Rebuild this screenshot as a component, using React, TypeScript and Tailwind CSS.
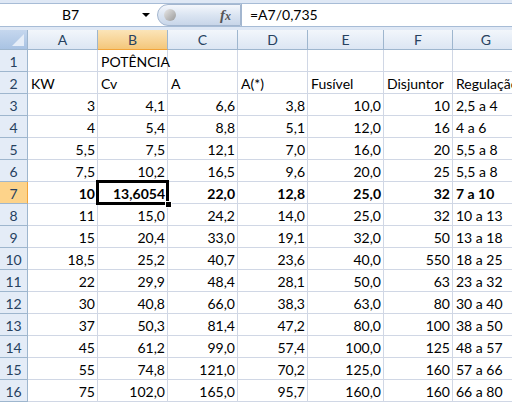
const rows: string[][] = [
  ["3", "4,1", "6,6", "3,8", "10,0", "10", "2,5 a 4"],
  ["4", "5,4", "8,8", "5,1", "12,0", "16", "4 a 6"],
  ["5,5", "7,5", "12,1", "7,0", "16,0", "20", "5,5 a 8"],
  ["7,5", "10,2", "16,5", "9,6", "20,0", "25", "5,5 a 8"],
  ["10", "13,6054", "22,0", "12,8", "25,0", "32", "7 a 10"],
  ["11", "15,0", "24,2", "14,0", "25,0", "32", "10 a 13"],
  ["15", "20,4", "33,0", "19,1", "32,0", "50", "13 a 18"],
  ["18,5", "25,2", "40,7", "23,6", "40,0", "550", "18 a 25"],
  ["22", "29,9", "48,4", "28,1", "50,0", "63", "23 a 32"],
  ["30", "40,8", "66,0", "38,3", "63,0", "80", "30 a 40"],
  ["37", "50,3", "81,4", "47,2", "80,0", "100", "38 a 50"],
  ["45", "61,2", "99,0", "57,4", "100,0", "125", "48 a 57"],
  ["55", "74,8", "121,0", "70,2", "125,0", "160", "57 a 66"],
  ["75", "102,0", "165,0", "95,7", "160,0", "160", "66 a 80"],
];

const cols = ["A", "B", "C", "D", "E", "F", "G"];

function RowHead({ n, active }: { n: number; active?: boolean }) {
  return (
    <div
      className={
        "h-[22px] flex items-end justify-center pb-[2px] border-r border-b border-[#9eb6ce] text-[#27415f] " +
        (active ? "bg-[#fdd38a] border-r-[#f2a43a]" : "bg-[#e4ecf7]")
      }
    >
      {n}
    </div>
  );
}

function Cell({
  children,
  right,
  bold,
  selected,
}: {
  children?: React.ReactNode;
  right?: boolean;
  bold?: boolean;
  selected?: boolean;
}) {
  return (
    <div
      className={
        "relative h-[22px] flex items-end pb-[2px] border-r border-b border-[#d0d7e5] whitespace-nowrap " +
        (right ? "justify-end pr-[2px] " : "justify-start pl-[3px] ") +
        (bold ? "font-bold" : "")
      }
    >
      {children}
      {selected && (
        <>
          <div className="absolute z-10 left-[-2px] top-[-2px] right-[-2px] bottom-[-2px] border-[3px] border-black pointer-events-none" />
          <div className="absolute z-20 right-[-5px] bottom-[-5px] w-[7px] h-[7px] bg-black border border-white" />
        </>
      )}
    </div>
  );
}

export default function App() {
  return (
    <div
      className="w-[512px] h-[403px] overflow-hidden bg-white text-[14px] leading-none text-black"
      style={{ fontFamily: "Lato, 'Liberation Sans', sans-serif" }}
    >
      {/* formula bar */}
      <div className="h-[30px] bg-[#dfe8f5] pt-[3px] pb-[3px]">
        <div className="h-[24px] flex bg-white border-t border-b border-[#a7bcd6]">
          <div className="w-[157px] flex items-center relative">
            <span className="absolute left-[62px] text-[14px]">B7</span>
            <span className="absolute left-[142px] top-[9px] w-0 h-0 border-l-[4px] border-r-[4px] border-t-[4px] border-l-transparent border-r-transparent border-t-black" />
          </div>
          <div className="w-[84px] h-[22px] rounded-l-full bg-gradient-to-b from-[#f4f7fc] via-[#dbe5f2] to-[#c8d6e9] border border-[#a3b6cf] flex items-center justify-between px-[6px]">
            <span className="w-[12px] h-[12px] rounded-full bg-gradient-to-br from-[#e8e8e8] to-[#9a9a9a]" />
            <span
              className="italic font-bold text-[15px] text-[#555] pr-[3px]"
              style={{ fontFamily: "'Liberation Serif', serif" }}
            >
              f<span className="text-[12px]">x</span>
            </span>
          </div>
          <div className="flex-1 flex items-center pl-[8px] border-l border-[#a3b6cf]">=A7/0,735</div>
        </div>
      </div>

      {/* sheet */}
      <div className="grid grid-cols-[28px_70px_70px_70px_70px_76px_69px_1fr]">
        {/* corner */}
        <div className="h-[20px] relative bg-gradient-to-b from-[#c5d7ee] to-[#a9c3e3] border-r border-b border-[#9eb6ce]">
          <div
            className="absolute right-[3px] bottom-[3px] w-0 h-0"
            style={{ borderBottom: "12px solid #e6eef8", borderLeft: "12px solid transparent" }}
          />
        </div>
        {cols.map((c) => (
          <div
            key={c}
            className={
              "h-[20px] flex items-center justify-center border-r border-b border-[#9eb6ce] text-[#27415f] " +
              (c === "B"
                ? "bg-gradient-to-b from-[#fbe4b8] to-[#f4c77a] border-b-[#f2a43a]"
                : "bg-gradient-to-b from-[#f2f6fb] to-[#dce6f3]")
            }
          >
            {c}
          </div>
        ))}

        {/* row 1 */}
        <RowHead n={1} />
        <Cell />
        <Cell>POTÊNCIA</Cell>
        <Cell />
        <Cell />
        <Cell />
        <Cell />
        <Cell />

        {/* row 2 */}
        <RowHead n={2} />
        <Cell>KW</Cell>
        <Cell>Cv</Cell>
        <Cell>A</Cell>
        <Cell>A(*)</Cell>
        <Cell>Fusível</Cell>
        <Cell>Disjuntor</Cell>
        <Cell>Regulação</Cell>

        {rows.map((r, i) => {
          const n = i + 3;
          const bold = n === 7;
          return (
            <div key={n} className="contents">
              <RowHead n={n} active={bold} />
              {r.map((v, j) => (
                <Cell key={j} right={j < 6} bold={bold} selected={bold && j === 1}>
                  {v}
                </Cell>
              ))}
            </div>
          );
        })}
      </div>
    </div>
  );
}
